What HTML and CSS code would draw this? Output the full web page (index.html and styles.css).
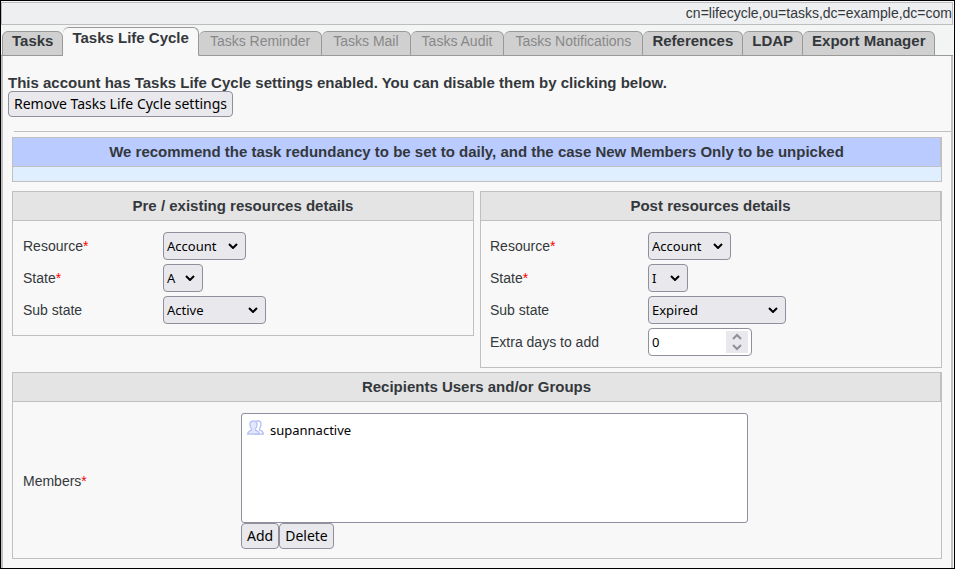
FILE: index.html
```html
<!DOCTYPE html>
<html lang="en">
<head>
<meta charset="utf-8">
<title>Tasks Life Cycle</title>
<link rel="stylesheet" href="styles.css">
</head>
<body>
<div class="window">
  <header class="dn-bar">cn=lifecycle,ou=tasks,dc=example,dc=com</header>
  <nav class="tabs">
    <a class="tab" href="#tasks">Tasks</a>
    <a class="tab tab-active" href="#lifecycle" aria-current="page">Tasks Life Cycle</a>
    <a class="tab tab-off" href="#reminder">Tasks Reminder</a>
    <a class="tab tab-off" href="#mail">Tasks Mail</a>
    <a class="tab tab-off" href="#audit">Tasks Audit</a>
    <a class="tab tab-off" href="#notifications">Tasks Notifications</a>
    <a class="tab" href="#references">References</a>
    <a class="tab" href="#ldap">LDAP</a>
    <a class="tab" href="#export">Export Manager</a>
  </nav>
  <main class="content">
    <div class="intro">
      <p class="notice">This account has Tasks Life Cycle settings enabled. You can disable them by clicking below.</p>
      <button class="button" type="button">Remove Tasks Life Cycle settings</button>
    </div>
    <hr class="rule">
    <form class="sections">
      <section class="panel panel-info">
        <h2 class="panel-title panel-title-edge">We recommend the task redundancy to be set to daily, and the case New Members Only to be unpicked</h2>
        <div class="panel-strip"></div>
      </section>
      <div class="columns">
        <section class="panel">
          <h2 class="panel-title">Pre / existing resources details</h2>
          <div class="fields">
            <label for="pre-resource">Resource<span class="required">*</span></label>
            <span class="picker picker-resource"><select id="pre-resource"><option>Account</option></select><svg viewBox="0 0 10 6"><path d="M1 1l4 4 4-4"/></svg></span>
            <label for="pre-state">State<span class="required">*</span></label>
            <span class="picker picker-state"><select id="pre-state"><option>A</option></select><svg viewBox="0 0 10 6"><path d="M1 1l4 4 4-4"/></svg></span>
            <label for="pre-sub">Sub state</label>
            <span class="picker picker-sub"><select id="pre-sub"><option>Active</option></select><svg viewBox="0 0 10 6"><path d="M1 1l4 4 4-4"/></svg></span>
          </div>
        </section>
        <section class="panel">
          <h2 class="panel-title panel-title-edge">Post resources details</h2>
          <div class="fields fields-post">
            <label for="post-resource">Resource<span class="required">*</span></label>
            <span class="picker picker-resource"><select id="post-resource"><option>Account</option></select><svg viewBox="0 0 10 6"><path d="M1 1l4 4 4-4"/></svg></span>
            <label for="post-state">State<span class="required">*</span></label>
            <span class="picker picker-state"><select id="post-state"><option>I</option></select><svg viewBox="0 0 10 6"><path d="M1 1l4 4 4-4"/></svg></span>
            <label for="post-sub">Sub state</label>
            <span class="picker picker-wide"><select id="post-sub"><option>Expired</option></select><svg viewBox="0 0 10 6"><path d="M1 1l4 4 4-4"/></svg></span>
            <label for="extra-days">Extra days to add</label>
            <span class="stepper"><input id="extra-days" type="number" value="0"><svg viewBox="0 0 22 22"><path d="M7 8l4-4 4 4M7 14l4 4 4-4"/></svg></span>
          </div>
        </section>
      </div>
      <section class="panel">
        <h2 class="panel-title panel-title-edge">Recipients Users and/or Groups</h2>
        <div class="fields fields-members">
          <label for="members">Members<span class="required">*</span></label>
          <div class="members">
            <select id="members" class="member-list" multiple size="4"><option>supannactive</option></select>
            <div class="actions">
              <button class="button" type="button">Add</button>
              <button class="button" type="button">Delete</button>
            </div>
          </div>
        </div>
      </section>
    </form>
  </main>
</div>
</body>
</html>
```
FILE: styles.css
```css
* {
  box-sizing: border-box;
}

body {
  margin: 0;
  background: #f8f8f8;
  color: #34383c;
  font: 14px/18px "Liberation Sans", Arial, sans-serif;
}

.window {
  display: flex;
  flex-direction: column;
  min-height: 100vh;
  padding: 1px 1px 0 0;
  border: 1px solid #000;
}

.dn-bar {
  height: 23px;
  padding: 1px 0;
  border: 1px solid #bdbdc1;
  background: #eeeff1;
  text-align: right;
}

.tabs {
  display: flex;
  align-items: flex-end;
  height: 31px;
  padding: 0 1px;
  background: linear-gradient(#999, #999) bottom / 100% 1px no-repeat #f3f5f4;
}

.tab {
  height: 25px;
  padding: 0 9px;
  border: 1px solid #999;
  border-left-width: 0;
  border-radius: 6px 6px 0 0;
  background: #d0d0d0;
  color: #34383c;
  font-size: 15px;
  font-weight: bold;
  text-decoration: none;
  white-space: nowrap;
}

.tab:first-child {
  border-left-width: 1px;
}

.tab-active {
  height: 29px;
  padding-top: 1px;
  border-bottom-color: #f8f8f8;
  background: #f8f8f8;
}

.tab-off {
  padding: 0 11px;
  color: #888;
  font-size: 14px;
  font-weight: normal;
}

.content {
  flex: 1;
  padding-top: 18px;
  border: solid #c0c0c0;
  border-width: 0 2px;
}

.intro {
  padding: 0 5px;
}

.notice {
  margin: 0;
  font-size: 15px;
  font-weight: bold;
  line-height: 17px;
}

.rule {
  height: 1px;
  margin: 14px 0 5px 11px;
  border: 0;
  background: #c0c0c0;
}

.sections {
  display: flex;
  flex-direction: column;
  gap: 4px;
  padding: 0 9px 8px;
}

.panel {
  border: 1px solid #c0c0c0;
}

.panel-title {
  height: 29px;
  margin: 0;
  padding: 5px;
  border-bottom: 1px solid #c0c0c0;
  background: #e4e4e4;
  font-size: 15px;
  line-height: 18px;
  text-align: center;
}

.panel-title-edge {
  border-right: 1px solid #c0c0c0;
}

.panel-info {
  margin-bottom: 5px;
  background: #dfefff;
}

.panel-info .panel-title {
  background: #b9cbff;
}

.panel-strip {
  height: 14px;
}

.columns {
  display: grid;
  grid-template-columns: 1fr 1fr;
  align-items: start;
  gap: 6px;
}

.fields {
  display: grid;
  grid-template-columns: 140px 1fr;
  align-items: center;
  gap: 4px 0;
  padding: 11px 10px;
}

.fields-post {
  grid-template-columns: 158px 1fr;
  padding-left: 9px;
}

.fields-members {
  grid-template-columns: 218px 1fr;
  padding-bottom: 9px;
}

.required {
  color: #f00;
}

.button,
select,
input {
  margin: 0;
  border: 1px solid #8f8f9d;
  border-radius: 4px;
  background: #e9e9ed;
  color: #000;
  font: 13px/18px "Noto Sans", sans-serif;
}

.button {
  display: block;
  height: 26px;
  padding: 0 5px;
  font-size: 14px;
}

.picker,
.stepper {
  position: relative;
  height: 28px;
}

.picker select,
.stepper input {
  width: 100%;
  height: 28px;
  padding: 0 3px;
  appearance: none;
}

.picker-resource {
  width: 83px;
}

.picker-state {
  width: 40px;
}

.picker-sub {
  width: 103px;
}

.picker-wide {
  width: 138px;
}

.picker svg {
  position: absolute;
  top: 11px;
  right: 8px;
  width: 10px;
  height: 6px;
  fill: none;
  stroke: #000;
  stroke-width: 2;
  pointer-events: none;
}

.stepper {
  width: 104px;
}

.stepper input {
  background: #fff;
}

.stepper input::-webkit-inner-spin-button {
  appearance: none;
}

.stepper svg {
  position: absolute;
  top: 3px;
  right: 4px;
  width: 22px;
  height: 22px;
  background: #e9e9ed;
  fill: none;
  stroke: #8f8f9d;
  stroke-width: 2;
  pointer-events: none;
}

.member-list {
  display: block;
  width: 100%;
  max-width: 507px;
  height: 110px;
  padding: 4px 5px;
  border-radius: 3px;
  background: #fff;
}

.member-list option {
  min-height: 24px;
  padding: 3px 0 3px 23px;
  background: url("data:image/svg+xml,%3Csvg xmlns='http://www.w3.org/2000/svg' width='17' height='15' viewBox='0 0 17 15' fill='%23e3e8ff' stroke='%23b9c3f5' stroke-width='1.4'%3E%3Cpath fill='%23fff' d='M9 1.500c2-1.500 5-.7 5 2.500c0 2-.4 3.500-1.500 4.500v1.500c2 .7 3.800 1.200 3.800 4H8V6z'/%3E%3Cpath d='M6.500 1C4 1 3 2.600 3 4.500c0 2 .5 3.500 1.500 4.300v1.500C2.500 11 .7 11.500.7 14h11.600c0-2.500-1.800-3-3.800-3.700V8.800C9.500 8 10 6.500 10 4.500 10 2.600 9 1 6.500 1z'/%3E%3C/svg%3E") 0 2px no-repeat;
}

.actions {
  display: flex;
}
```
